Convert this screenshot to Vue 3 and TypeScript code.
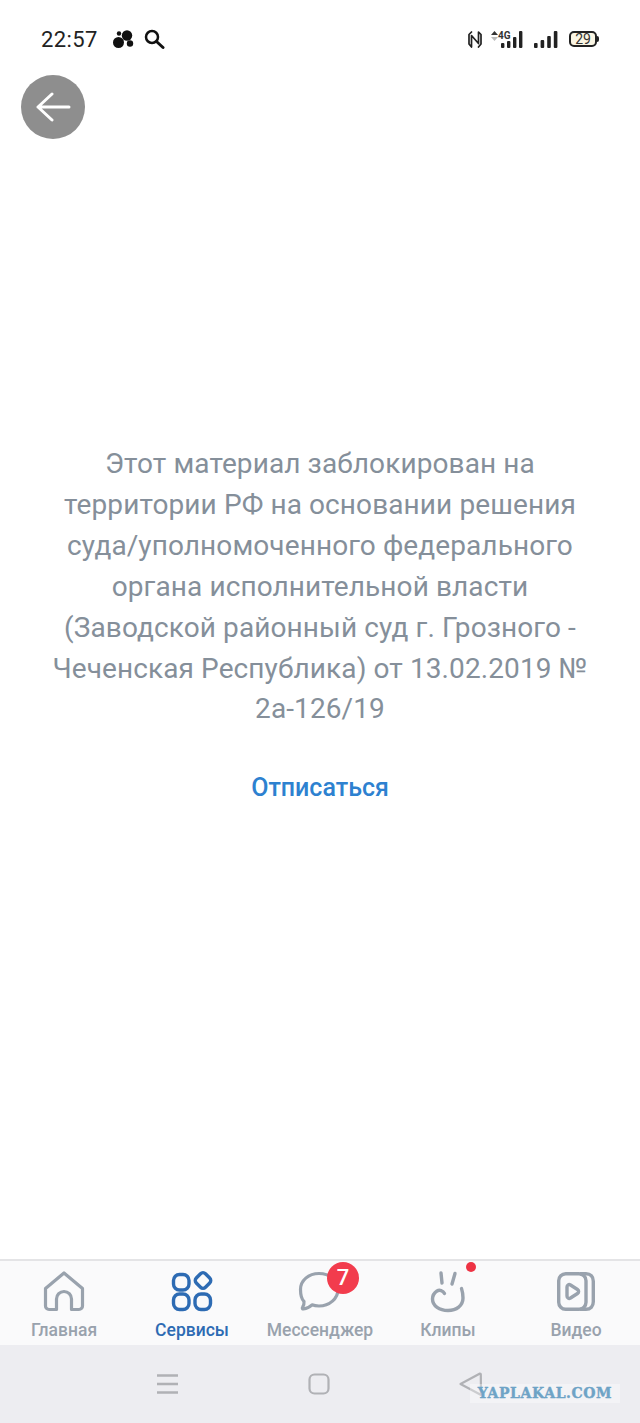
<script setup lang="ts">
interface Tab {
  id: string
  label: string
  active?: boolean
}

const tabs: Tab[] = [
  { id: "home", label: "Главная" },
  { id: "services", label: "Сервисы", active: true },
  { id: "messenger", label: "Мессенджер" },
  { id: "clips", label: "Клипы" },
  { id: "video", label: "Видео" },
]
</script>

<template>
  <div class="screen">
    <header class="status">
      <div class="status-left">
        <span class="time">22:57</span>
        <svg class="ic-dots" width="21" height="19" viewBox="0 0 21 19">
          <circle cx="5.500" cy="12.500" r="5.500" fill="#111" />
          <circle cx="14" cy="5.500" r="5.200" fill="#111" />
          <circle cx="6" cy="3.500" r="2.200" fill="#111" />
          <circle cx="17" cy="13.500" r="3.200" fill="#111" />
        </svg>
        <svg width="21" height="22" viewBox="0 0 21 22" fill="none" stroke="#111">
          <circle cx="8" cy="9" r="6" stroke-width="2.500" />
          <path d="M12.500 13.500 19 19.500" stroke-width="3" stroke-linecap="round" />
        </svg>
      </div>
      <div class="status-right">
        <svg width="14" height="17" viewBox="0 0 14 17" fill="none" stroke="#222" stroke-width="1.700" stroke-linejoin="round" stroke-linecap="round">
          <path d="M3.500 1 1 3.500V13l2.500 3V4.500l7 8V1L13 3.500V13l-2.500 3" />
        </svg>
        <div class="net">
          <svg class="net-arrows" width="7" height="10" viewBox="0 0 7 10">
            <path d="M3.500 0 7 4H0z" fill="#333" />
            <path d="M3.500 10 7 6H0z" fill="#bbb" />
          </svg>
          <span class="net-label">4G</span>
          <svg width="22" height="17" viewBox="0 0 22 17" fill="#222">
            <rect x="0" y="12" width="3.400" height="5" rx="1" />
            <rect x="6" y="10" width="3.400" height="7" rx="1" />
            <rect x="12" y="6" width="3.400" height="11" rx="1" />
            <rect x="18" y="0" width="3.400" height="17" rx="1" />
          </svg>
        </div>
        <svg class="sig2" width="24" height="17" viewBox="0 0 24 17" fill="#222">
          <rect x="0" y="12" width="3.600" height="5" rx="1" />
          <rect x="6.600" y="9" width="3.600" height="8" rx="1" />
          <rect x="13.200" y="5" width="3.600" height="12" rx="1" />
          <rect x="19.800" y="0" width="3.600" height="17" rx="1" />
        </svg>
        <div class="battery">
          <span class="battery-text">29</span>
          <i class="battery-tip"></i>
        </div>
      </div>
    </header>

    <button class="back" aria-label="Назад">
      <svg width="36" height="30" viewBox="0 0 36 30" fill="none" stroke="#fff" stroke-width="3" stroke-linecap="round" stroke-linejoin="round">
        <path d="M17 2 3 15l14 13M3 15h31" />
      </svg>
    </button>

    <main class="content">
      <p class="message">
        Этот материал заблокирован на<br />
        территории РФ на основании решения<br />
        суда/уполномоченного федерального<br />
        органа исполнительной власти<br />
        (Заводской районный суд г. Грозного -<br />
        Чеченская Республика) от 13.02.2019 №<br />
        2а-126/19
      </p>
      <a class="unsubscribe">Отписаться</a>
    </main>

    <nav class="tabs">
      <div v-for="t in tabs" :key="t.id" class="tab" :class="{ active: t.active }">
        <div class="tab-icon">
          <svg v-if="t.id === 'home'" width="44" height="44" viewBox="0 0 44 44" fill="none" stroke="#99a2ad" stroke-width="3.200" stroke-linejoin="round" stroke-linecap="round">
            <path d="M3.500 18.500 22 3l18.500 15.500V36a3.500 3.500 0 0 1-3.500 3.500h-7.500V29a7.500 7.500 0 0 0-15 0v10.500H7a3.500 3.500 0 0 1-3.500-3.500z" />
          </svg>
          <svg v-else-if="t.id === 'services'" width="44" height="44" viewBox="0 0 44 44" fill="none" stroke="#2d6bb3" stroke-width="3.400">
            <rect x="3.500" y="4.500" width="15.500" height="15.500" rx="6" />
            <rect x="3.500" y="24" width="15.500" height="15.500" rx="6" />
            <rect x="25" y="24" width="15.500" height="15.500" rx="6" />
            <rect x="26.500" y="4" width="13" height="13" rx="3.500" transform="rotate(45 33 10.500)" />
          </svg>
          <template v-else-if="t.id === 'messenger'">
            <svg width="44" height="44" viewBox="0 0 44 44" fill="none" stroke="#99a2ad" stroke-width="3.200" stroke-linejoin="round">
              <path d="M21 3.500c10.500 0 19 7 19 16S31.500 36 21 36c-2.500 0-5-.4-7-1.200-2 1.900-5.500 3.800-8.500 4.200-1 .1-1.500-.8-1-1.500 1-1.500 1.800-3.500 1.500-6C3.500 29 2.500 24.500 2.500 19.500 2.500 10.500 10.500 3.500 21 3.500z" />
            </svg>
            <span class="badge">7</span>
          </template>
          <template v-else-if="t.id === 'clips'">
            <svg width="44" height="44" viewBox="0 0 44 44" fill="none" stroke="#99a2ad" stroke-width="3.400" stroke-linecap="round">
              <path d="M15 3l1 10M29 3.500 26 14" />
              <path d="M18.500 23.500c-1.500-3-5-4-7.500-2.500-3 2-4.500 5-4.500 8 0 7 7 11.500 15.500 11.500S37 35.500 37 28c0-3.500-.5-6.500-1.500-9.500" />
            </svg>
            <span class="dot"></span>
          </template>
          <svg v-else width="44" height="44" viewBox="0 0 44 44" fill="none" stroke="#99a2ad" stroke-width="3.400" stroke-linejoin="round">
            <rect x="4.700" y="3.700" width="27.300" height="35.600" rx="7" />
            <path d="M26 3.700h6c4.500 0 7.300 3 7.300 7.500v20.600c0 4.500-2.800 7.500-7.300 7.500h-6" />
            <path d="M13 17c0-2 1.800-3 3.500-2l7 4.500c1.500 1 1.500 3 0 4l-7 4.500c-1.700 1-3.500 0-3.500-2z" />
          </svg>
        </div>
        <span class="tab-label">{{ t.label }}</span>
      </div>
    </nav>

    <footer class="sysbar">
      <svg width="21" height="20" viewBox="0 0 21 20" stroke="#b0b1b5" stroke-width="2.400">
        <path d="M0 1.500h21M0 10h21M0 18.500h21" />
      </svg>
      <svg width="22" height="22" viewBox="0 0 22 22" fill="none" stroke="#b0b1b5" stroke-width="2.200">
        <rect x="1.500" y="1.500" width="19" height="19" rx="5" />
      </svg>
      <svg width="24" height="24" viewBox="0 0 24 24" fill="none" stroke="#b0b1b5" stroke-width="2.200" stroke-linejoin="round">
        <path d="M1.500 12 21 1.500c.5 0 .8.300.8.800L22 22c0 .5-.4.700-.8.500z" />
      </svg>
    </footer>

    <div class="watermark">YAPLAKAL.COM</div>
  </div>
</template>

<style>
html,
body {
  margin: 0;
  background: #fff;
}
</style>

<style scoped>
.screen {
  position: relative;
  display: flex;
  flex-direction: column;
  width: 640px;
  height: 1423px;
  overflow: hidden;
  background: #fff;
  font-family: Roboto, "Noto Sans", sans-serif;
}

.status {
  display: flex;
  align-items: center;
  justify-content: space-between;
  height: 40px;
  padding: 19px 43px 0 41px;
  flex-shrink: 0;
}

.status-left {
  display: flex;
  align-items: center;
}

.time {
  font-size: 22px;
  color: #222;
  letter-spacing: 0.4px;
  margin-right: 15px;
}

.ic-dots {
  margin-right: 10px;
}

.status-right {
  display: flex;
  align-items: center;
}

.net {
  position: relative;
  display: flex;
  align-items: flex-end;
  justify-content: flex-end;
  width: 32px;
  height: 17px;
  margin-left: 9px;
}

.net-arrows {
  position: absolute;
  left: 0;
  top: 0;
}

.net-label {
  position: absolute;
  left: 7px;
  top: 0;
  z-index: 1;
  padding-right: 1px;
  font-size: 10px;
  font-weight: 700;
  line-height: 10px;
  color: #333;
  background: #fff;
}

.sig2 {
  margin-left: 11px;
}

.battery {
  position: relative;
  box-sizing: border-box;
  width: 28px;
  height: 16px;
  margin-left: 11px;
  border: 2px solid #222;
  border-radius: 5px;
  background: #fbf6e4;
  text-align: center;
}

.battery-text {
  display: block;
  font-size: 14px;
  line-height: 12px;
  color: #333;
}

.battery-tip {
  position: absolute;
  right: -4px;
  top: 3px;
  width: 2px;
  height: 6px;
  border-radius: 0 2px 2px 0;
  background: #222;
}

.back {
  position: absolute;
  left: 21px;
  top: 75px;
  display: flex;
  align-items: center;
  justify-content: center;
  width: 64px;
  height: 64px;
  padding: 0;
  border: none;
  border-radius: 50%;
  background: #8e8e8e;
}

.content {
  flex: 1;
  display: flex;
  flex-direction: column;
  align-items: center;
  padding-top: 385px;
}

.message {
  margin: 0;
  font-size: 28px;
  letter-spacing: 0.1px;
  line-height: 40.900px;
  color: #858f9a;
  text-align: center;
  white-space: nowrap;
}

.unsubscribe {
  margin-top: 42px;
  font-size: 25px;
  line-height: 32px;
  font-weight: 500;
  color: #2d81d0;
}

.tabs {
  display: grid;
  grid-template-columns: repeat(5, 128px);
  height: 86px;
  flex-shrink: 0;
  border-top: 2px solid #e4e4e6;
  background: #fafafb;
  box-sizing: border-box;
}

.tab {
  display: flex;
  flex-direction: column;
  align-items: center;
  padding-top: 9px;
}

.tab-icon {
  position: relative;
  width: 44px;
  height: 44px;
}

.tab-label {
  margin-top: 6px;
  font-size: 17.500px;
  line-height: 20px;
  font-weight: 500;
  color: #99a2ad;
  white-space: nowrap;
}

.tab.active .tab-label {
  color: #2d6bb3;
}

.badge {
  position: absolute;
  left: 29px;
  top: -8px;
  width: 32px;
  height: 32px;
  border-radius: 50%;
  background: #f23c4d;
  color: #fff;
  font-size: 22px;
  font-weight: 500;
  line-height: 31px;
  text-align: center;
}

.dot {
  position: absolute;
  left: 40px;
  top: -8px;
  width: 10px;
  height: 10px;
  border-radius: 50%;
  background: #ee3344;
}

.sysbar {
  display: flex;
  align-items: center;
  justify-content: space-between;
  height: 78px;
  flex-shrink: 0;
  padding: 0 157px;
  background: #ededf1;
  box-sizing: border-box;
}

.watermark {
  position: absolute;
  left: 470px;
  top: 1384px;
  width: 150px;
  height: 19px;
  background: rgba(255, 255, 255, 0.35);
  color: #6ea3c6;
  font-family: "DejaVu Serif", serif;
  font-size: 14px;
  font-weight: 700;
  letter-spacing: 0.6px;
  -webkit-text-stroke: 0.4px #6ea3c6;
  line-height: 19px;
  text-align: center;
  white-space: nowrap;
}
</style>
